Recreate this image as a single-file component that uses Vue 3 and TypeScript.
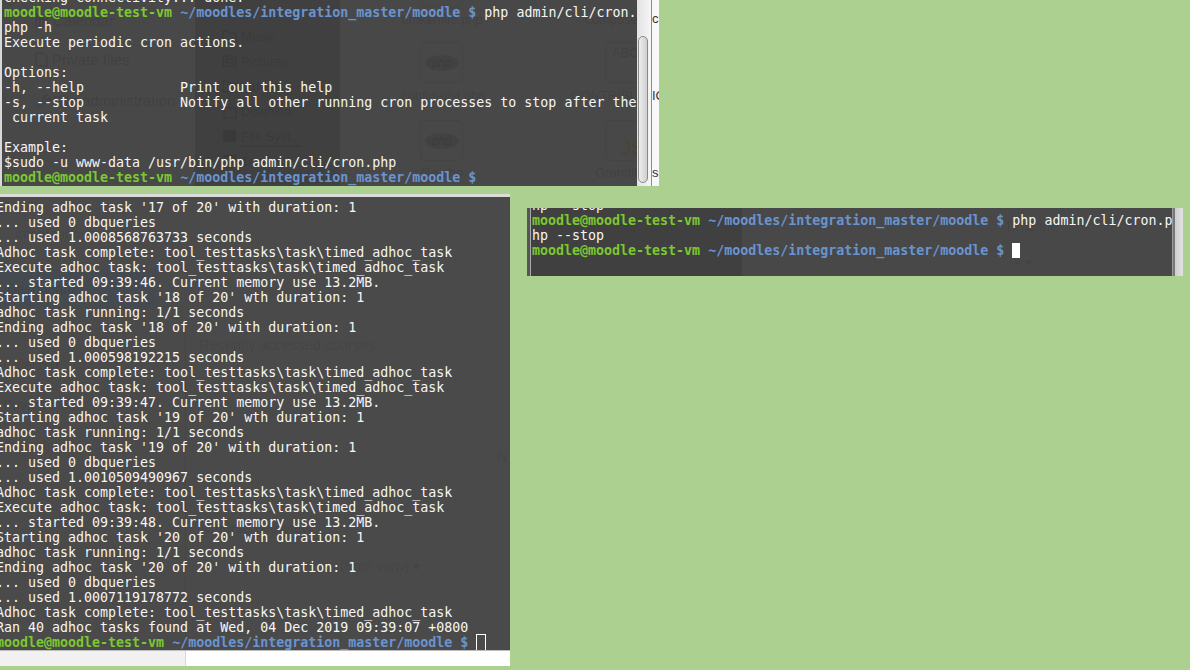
<script setup lang="ts">
const PROMPT = 'moodle@moodle-test-vm'
const PATH = '~/moodles/integration_master/moodle $'

interface Line { user: boolean; text: string; cursor?: 'solid' | 'hollow' }

function parse(raw: string[]): Line[] {
  return raw.map((r) => {
    if (r.startsWith(PROMPT)) {
      return { user: true, text: r.slice(PROMPT.length + PATH.length + 2) }
    }
    return { user: false, text: r }
  })
}

const topLines = parse([
  'checking connectivity... done.',
  `${PROMPT} ${PATH} php admin/cli/cron.`,
  'php -h',
  'Execute periodic cron actions.',
  '',
  'Options:',
  '-h, --help            Print out this help',
  '-s, --stop            Notify all other running cron processes to stop after the',
  ' current task',
  '',
  'Example:',
  '$sudo -u www-data /usr/bin/php admin/cli/cron.php',
  `${PROMPT} ${PATH} `,
])

const logLines = parse([
  "Ending adhoc task '17 of 20' with duration: 1",
  '... used 0 dbqueries',
  '... used 1.0008568763733 seconds',
  'Adhoc task complete: tool_testtasks\\task\\timed_adhoc_task',
  'Execute adhoc task: tool_testtasks\\task\\timed_adhoc_task',
  '... started 09:39:46. Current memory use 13.2MB.',
  "Starting adhoc task '18 of 20' wth duration: 1",
  'adhoc task running: 1/1 seconds',
  "Ending adhoc task '18 of 20' with duration: 1",
  '... used 0 dbqueries',
  '... used 1.000598192215 seconds',
  'Adhoc task complete: tool_testtasks\\task\\timed_adhoc_task',
  'Execute adhoc task: tool_testtasks\\task\\timed_adhoc_task',
  '... started 09:39:47. Current memory use 13.2MB.',
  "Starting adhoc task '19 of 20' wth duration: 1",
  'adhoc task running: 1/1 seconds',
  "Ending adhoc task '19 of 20' with duration: 1",
  '... used 0 dbqueries',
  '... used 1.0010509490967 seconds',
  'Adhoc task complete: tool_testtasks\\task\\timed_adhoc_task',
  'Execute adhoc task: tool_testtasks\\task\\timed_adhoc_task',
  '... started 09:39:48. Current memory use 13.2MB.',
  "Starting adhoc task '20 of 20' wth duration: 1",
  'adhoc task running: 1/1 seconds',
  "Ending adhoc task '20 of 20' with duration: 1",
  '... used 0 dbqueries',
  '... used 1.0007119178772 seconds',
  'Adhoc task complete: tool_testtasks\\task\\timed_adhoc_task',
  'Ran 40 adhoc tasks found at Wed, 04 Dec 2019 09:39:07 +0800',
  `${PROMPT} ${PATH} `,
])
logLines[logLines.length - 1].cursor = 'hollow'

const stopLines = parse([
  'hp --stop',
  `${PROMPT} ${PATH} php admin/cli/cron.p`,
  'hp --stop',
  `${PROMPT} ${PATH} `,
])
stopLines[stopLines.length - 1].cursor = 'solid'

const windows = [
  {
    id: 'top',
    lines: topLines,
    ghosts: [
      { t: 'Calendar', x: 53, y: 20, s: 15 }, { t: 'Private files', x: 52, y: 59, s: 15 },
      { t: 'Site administration', x: 52, y: 100, s: 15 }, { t: 'Music', x: 241, y: 36, s: 13 },
      { t: 'Pictures', x: 241, y: 61, s: 13 }, { t: 'Videos', x: 241, y: 86, s: 13 },
      { t: 'Downloa...', x: 241, y: 111, s: 13 }, { t: 'File Syst...', x: 241, y: 136, s: 13 },
      { t: 'Trash', x: 241, y: 161, s: 13 }, { t: 'brokenfile.php', x: 401, y: 19, s: 13 },
      { t: 'composer.json', x: 585, y: 19, s: 13 }, { t: 'config-dist.php', x: 401, y: 95, s: 13 },
      { t: 'CONTRIBUTING', x: 571, y: 95, s: 13 }, { t: 'file.php', x: 421, y: 172, s: 13 },
      { t: 'Gruntfile.js', x: 595, y: 172, s: 13 }, { t: 'ABC', x: 612, y: 52, s: 13 },
    ],
  },
  {
    id: 'log',
    lines: logLines,
    ghosts: [
      { t: 'integration_master', x: 15, y: 40, s: 14 }, { t: 'Dashboard', x: 7, y: 95, s: 14 },
      { t: 'Recently accessed courses', x: 199, y: 151, s: 14.5 }, { t: 'Calendar', x: 3, y: 171, s: 14 },
      { t: 'Private files', x: 3, y: 211, s: 14 }, { t: 'Site admin', x: 3, y: 252, s: 14 },
      { t: 'N', x: 497, y: 262, s: 14 }, { t: 'Course overview', x: 204, y: 334, s: 14.5 },
      { t: '(from view) ▾', x: 340, y: 372, s: 14 },
    ],
  },
  {
    id: 'stop',
    lines: stopLines,
    ghosts: [{ t: 'Timeline', x: 473, y: 18, s: 14.5 }, { t: '◷ ▾', x: 478, y: 54, s: 14 }],
  },
]

const filePanels = [
  { x: 420, y: -34, php: false, js: false }, { x: 420, y: 42, php: true, js: false },
  { x: 420, y: 120, php: true, js: false }, { x: 605, y: 42, php: false, js: false },
  { x: 605, y: 120, php: false, js: true },
]
</script>

<template>
  <main class="desktop">
    <section v-for="w in windows" :key="w.id" class="win" :class="'win-' + w.id">
      <div class="term">
        <div class="shade"></div>
        <div v-if="w.id === 'top'" class="files">
          <div v-for="p in filePanels" :key="p.x + '-' + p.y" class="file" :style="{ left: p.x + 'px', top: p.y + 'px' }">
            <span v-if="p.php" class="php">php</span>
            <span v-if="p.js" class="js">JS</span>
          </div>
          <svg class="ghost-icons" width="300" height="186" viewBox="0 0 300 186" fill="none" stroke="#000" stroke-opacity="0.12">
            <rect x="34" y="15" width="11" height="11" />
            <path d="M34 19h11M38 15v11M41 15v11" />
            <path d="M34 53h7l4 4v9H34z" />
            <path d="M35 106l6-6a4 4 0 0 1 4-5l-2 3 2 2 3-2a4 4 0 0 1-5 4l-6 6z" />
            <path d="M221 31h5l1 2h7v9h-13z" />
            <path d="M221 56h13v10h-13zM224 59h7v4h-7z" />
            <path d="M221 81h5l1 2h7v9h-13z" />
            <path d="M222 108h12v10h-12zM228 103v8" />
            <rect x="221" y="130" width="13" height="12" fill="#000" fill-opacity="0.1" stroke="none" />
            <path d="M239 146h60" />
            <path d="M223 156h10l-1 12h-8zM222 156h12" />
          </svg>
        </div>
        <div v-if="w.id === 'log'" class="nav-panel"></div>
        <div v-if="w.id === 'log'" class="nav-line"></div>
        <span
          v-for="g in w.ghosts"
          :key="g.t + g.x"
          class="ghost"
          :style="{ left: g.x + 'px', top: g.y + 'px', fontSize: g.s + 'px' }"
        >{{ g.t }}</span>
        <div class="lines">
          <div v-for="(l, i) in w.lines" :key="i" class="line">
            <template v-if="l.user"><b class="user">{{ PROMPT }}</b>{{ ' ' }}<b class="path">{{ PATH }}</b>{{ ' ' }}</template>{{ l.text }}<i v-if="l.cursor" class="cursor" :class="l.cursor"></i>
          </div>
        </div>
      </div>
      <div v-if="w.id === 'top'" class="scroll">
        <div class="thumb"></div>
      </div>
      <div v-if="w.id === 'top'" class="sliver">
        <span class="sl s1">c</span><span class="sl s2">IG</span><span class="sl s3">s</span>
      </div>
      <div v-if="w.id === 'log'" class="status">
        <div class="status-a"></div>
        <div class="status-b"></div>
      </div>
      <div v-if="w.id === 'stop'" class="edge"></div>
    </section>
  </main>
</template>

<style scoped>
.desktop {
  position: relative;
  width: 1190px;
  height: 670px;
  overflow: hidden;
  background: #abd08f;
}
.win {
  position: absolute;
  display: flex;
  overflow: hidden;
}
.term {
  position: relative;
  flex: 1;
  min-width: 0;
  overflow: hidden;
  background: #484848;
}
.lines {
  position: relative;
  font-family: "DejaVu Sans Mono", monospace;
  font-size: 13.3px;
  line-height: 15px;
  color: #f6f6f6;
  white-space: pre;
}
.line {
  height: 15px;
}
.user {
  color: #7cc832;
  font-weight: 700;
}
.path {
  color: #6a94d0;
  font-weight: 700;
}
.cursor {
  display: inline-block;
  width: 8px;
  height: 15px;
  vertical-align: top;
  box-sizing: border-box;
}
.cursor.solid {
  background: #fff;
}
.cursor.hollow {
  width: 10px;
  height: 17px;
  margin-top: -1px;
  border: 1px solid #fff;
}
.ghost {
  position: absolute;
  font-family: "Liberation Sans", sans-serif;
  color: rgba(0, 0, 0, 0.11);
  white-space: pre;
  line-height: 1;
  transform: translateY(-50%);
}
.ghost-icons {
  position: absolute;
  left: 0;
  top: 0;
}
.shade {
  position: absolute;
  top: 0;
  bottom: 0;
  background: rgba(0, 0, 0, 0.1);
}

/* top window */
.win-top {
  left: 0;
  top: 0;
  width: 659px;
  height: 186px;
  background: #d8d8d8;
  padding-left: 2px;
  box-sizing: border-box;
}
.win-top .lines {
  margin-top: -10px;
  margin-left: 2px;
}
.win-top .shade {
  left: 193px;
  width: 145px;
}
.win-top .ghost {
  margin-left: -2px;
}
.files {
  position: absolute;
  inset: 0;
}
.file {
  position: absolute;
  box-sizing: border-box;
  display: flex;
  align-items: center;
  justify-content: center;
  width: 43px;
  height: 41px;
  margin-left: -2px;
  border-radius: 5px;
  border: 1px solid rgba(0, 0, 0, 0.05);
}
.php {
  width: 34px;
  height: 16px;
  border-radius: 50%;
  background: rgba(0, 0, 0, 0.07);
  color: rgba(0, 0, 0, 0.1);
  font: italic 12px/16px "Liberation Sans", sans-serif;
  text-align: center;
}
.js {
  align-self: flex-end;
  margin: 0 0 2px 12px;
  color: rgba(90, 50, 0, 0.22);
  font: 700 20px/1 "Liberation Sans", sans-serif;
}
.scroll {
  position: relative;
  width: 14px;
  border-right: 1px solid #8c8c8c;
  background: linear-gradient(to right, #e2e2e2, #f6f6f6);
}
.thumb {
  position: absolute;
  left: 1px;
  top: 36px;
  width: 8px;
  height: 145px;
  border: 1px solid #8a8a8a;
  border-radius: 5px;
  background: linear-gradient(to right, #eeeeee, #cfcfcf);
}
.sliver {
  position: relative;
  width: 7px;
  background: #f8f8f8;
  overflow: hidden;
}
.sl {
  position: absolute;
  left: 0;
  font-family: "Liberation Sans", sans-serif;
  font-size: 13px;
  line-height: 14px;
  color: #333;
}
.s1 { top: 12px; }
.s2 { top: 89px; }
.s3 { top: 166px; }

/* log window */
.win-log {
  left: 0;
  top: 194px;
  width: 510px;
  height: 472px;
  flex-direction: column;
  background: #fff;
  border-top: 3px solid #dcdcdc;
  box-sizing: border-box;
}
.win-log .term {
  background: #4a4a4a;
  border-bottom: 1px solid #bdbdbd;
}
.win-log .lines {
  margin-top: 3px;
  margin-left: -4px;
}
.win-log .shade {
  display: none;
}
.win-log .ghost {
  margin-top: -3px;
  color: rgba(0, 0, 0, 0.08);
}
.nav-panel {
  position: absolute;
  left: 0;
  top: 73px;
  width: 158px;
  height: 38px;
  background: #444a4f;
}
.nav-line {
  position: absolute;
  left: 185px;
  top: 133px;
  bottom: 0;
  width: 1px;
  background: rgba(0, 0, 0, 0.06);
}
.status {
  display: flex;
  height: 15px;
  flex: none;
}
.status-a {
  width: 185px;
  background: #f1f1f1;
  border-right: 1px solid #d8d8d8;
}
.status-b {
  flex: 1;
  background: #fff;
}

/* stop window */
.win-stop {
  left: 527px;
  top: 208px;
  width: 656px;
  height: 68px;
  border-left: 3px solid #555;
  box-sizing: border-box;
}
.win-stop .term {
  border-left: 1px solid #a8a8a8;
}
.win-stop .lines {
  margin-top: -10px;
  margin-left: 1px;
}
.win-stop .shade {
  left: 0;
  width: 211px;
}
.win-stop .ghost {
  color: rgba(0, 0, 0, 0.08);
}
.edge {
  width: 10px;
  flex: none;
  border-left: 1px solid #9a9a9a;
  box-shadow: inset 2px 0 0 #777;
  background: linear-gradient(to right, #c9c9c9, #e2e2e2);
}
</style>
